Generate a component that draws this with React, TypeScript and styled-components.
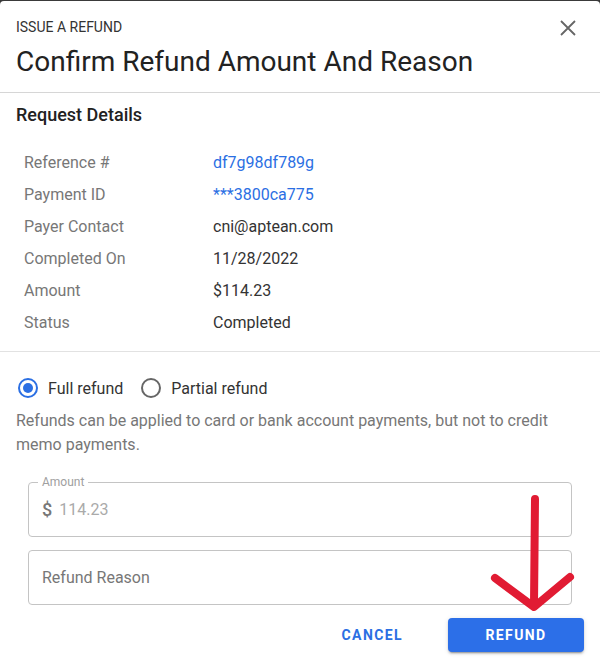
import { Fragment, useState } from 'react'
import styled, { createGlobalStyle } from 'styled-components'

const GlobalStyle = createGlobalStyle`
  html, body {
    margin: 0;
    padding: 0;
    background: #3a3a3a;
    font-family: Roboto, "Liberation Sans", Arial, sans-serif;
  }
`

const Dialog = styled.div`
  position: relative;
  width: 600px;
  height: 666px;
  margin-top: 1px;
  background: #fff;
  border-radius: 4px 4px 0 0;
  overflow: hidden;
`

const Header = styled.div`
  position: relative;
  padding: 16px 16px 12px;
  border-bottom: 1px solid #d6d6d6;
`

const Eyebrow = styled.div`
  font-size: 14px;
  line-height: 20px;
  color: #333;
  text-transform: uppercase;
`

const Title = styled.h1`
  margin: 7px 0 0;
  font-size: 28px;
  line-height: 36px;
  font-weight: 400;
  color: #222;
`

const CloseButton = styled.button`
  position: absolute;
  top: 17px;
  right: 22px;
  width: 20px;
  height: 20px;
  padding: 0;
  border: none;
  background: none;
  cursor: pointer;
  display: flex;
  align-items: center;
  justify-content: center;
`

const Section = styled.div`
  padding: 12px 16px 12px;
  border-bottom: 1px solid #e2e2e2;
`

const SectionTitle = styled.h2`
  margin: 0 0 22px;
  font-size: 18px;
  line-height: 20px;
  font-weight: 500;
  color: #222;
`

const Details = styled.div`
  display: grid;
  grid-template-columns: 189px 1fr;
  padding-left: 8px;
`

const Label = styled.div`
  font-size: 16px;
  line-height: 32px;
  color: #777;
`

const Value = styled.div<{ $link?: boolean }>`
  font-size: 16px;
  line-height: 32px;
  color: ${p => (p.$link ? '#2b6fe3' : '#333')};
`

const Body = styled.div`
  padding: 24px 16px 0;
`

const RadioGroup = styled.div`
  display: flex;
  align-items: center;
  gap: 16px;
  height: 24px;
`

const RadioLabel = styled.label`
  display: flex;
  align-items: center;
  gap: 10px;
  font-size: 16px;
  color: #333;
  cursor: pointer;
`

const RadioCircle = styled.span<{ $checked: boolean }>`
  box-sizing: border-box;
  width: 20px;
  height: 20px;
  margin-left: 2px;
  border-radius: 50%;
  border: 2px solid ${p => (p.$checked ? '#2b6fe3' : '#666')};
  display: flex;
  align-items: center;
  justify-content: center;
  &::after {
    content: '';
    width: 10px;
    height: 10px;
    border-radius: 50%;
    background: ${p => (p.$checked ? '#2b6fe3' : 'transparent')};
  }
`

const Note = styled.p`
  margin: 9px 0 0;
  font-size: 16px;
  line-height: 24px;
  color: #777;
`

const Fields = styled.div`
  display: flex;
  flex-direction: column;
  gap: 13px;
  margin: 25px 12px 0;
`

const Field = styled.div`
  box-sizing: border-box;
  height: 55px;
  padding: 0 13px;
  border: 1px solid #c4c4c4;
  border-radius: 4px;
  display: flex;
  align-items: center;
  position: relative;
`

const Legend = styled.span`
  position: absolute;
  top: -8px;
  left: 9px;
  padding: 0 4px;
  background: #fff;
  font-size: 12px;
  line-height: 14px;
  color: #a0a0a0;
`

const Dollar = styled.span`
  font-size: 18px;
  font-weight: 500;
  color: #777;
  margin-right: 7px;
`

const Input = styled.input<{ $muted?: boolean }>`
  flex: 1;
  border: none;
  outline: none;
  padding: 0;
  background: transparent;
  font-family: inherit;
  font-size: 16px;
  color: #333;
  &::placeholder {
    color: ${p => (p.$muted ? '#aaa' : '#777')};
  }
`

const Actions = styled.div`
  display: flex;
  justify-content: flex-end;
  align-items: center;
  gap: 23px;
  margin: 13px 0 0;
`

const Button = styled.button<{ $primary?: boolean }>`
  height: 34px;
  padding: 0 22px;
  min-width: ${p => (p.$primary ? '136px' : '100px')};
  border: none;
  border-radius: 4px;
  font-family: inherit;
  font-size: 14px;
  font-weight: 700;
  letter-spacing: 1.4px;
  text-transform: uppercase;
  cursor: pointer;
  color: ${p => (p.$primary ? '#fff' : '#2b6fe3')};
  background: ${p => (p.$primary ? '#2c6fe8' : 'transparent')};
  box-shadow: ${p =>
    p.$primary
      ? '0 3px 1px -2px rgba(0,0,0,0.2), 0 2px 2px 0 rgba(0,0,0,0.14), 0 1px 5px 0 rgba(0,0,0,0.12)'
      : 'none'};
`

const Annotation = styled.svg`
  position: absolute;
  left: 480px;
  top: 484px;
  pointer-events: none;
`

const details: { label: string; value: string; link?: boolean }[] = [
  { label: 'Reference #', value: 'df7g98df789g', link: true },
  { label: 'Payment ID', value: '***3800ca775', link: true },
  { label: 'Payer Contact', value: 'cni@aptean.com' },
  { label: 'Completed On', value: '11/28/2022' },
  { label: 'Amount', value: '$114.23' },
  { label: 'Status', value: 'Completed' },
]

export default function App() {
  const [mode, setMode] = useState<'full' | 'partial'>('full')

  return (
    <>
      <GlobalStyle />
      <Dialog>
        <Header>
          <Eyebrow>Issue a refund</Eyebrow>
          <Title>Confirm Refund Amount And Reason</Title>
          <CloseButton aria-label="close">
            <svg width="16" height="16" viewBox="0 0 16 16">
              <path d="M1 1L15 15M15 1L1 15" stroke="#666" strokeWidth="1.8" />
            </svg>
          </CloseButton>
        </Header>

        <Section>
          <SectionTitle>Request Details</SectionTitle>
          <Details>
            {details.map(d => (
              <Fragment key={d.label}>
                <Label>{d.label}</Label>
                <Value $link={d.link}>{d.value}</Value>
              </Fragment>
            ))}
          </Details>
        </Section>

        <Body>
          <RadioGroup>
            <RadioLabel onClick={() => setMode('full')}>
              <RadioCircle $checked={mode === 'full'} />
              Full refund
            </RadioLabel>
            <RadioLabel onClick={() => setMode('partial')}>
              <RadioCircle $checked={mode === 'partial'} />
              Partial refund
            </RadioLabel>
          </RadioGroup>
          <Note>
            Refunds can be applied to card or bank account payments, but not to credit
            memo payments.
          </Note>

          <Fields>
            <Field>
              <Legend>Amount</Legend>
              <Dollar>$</Dollar>
              <Input $muted placeholder="114.23" disabled={mode === 'full'} />
            </Field>
            <Field>
              <Input placeholder="Refund Reason" />
            </Field>
          </Fields>

          <Actions>
            <Button>Cancel</Button>
            <Button $primary>Refund</Button>
          </Actions>
        </Body>

        <Annotation width="100" height="130" viewBox="0 0 100 130">
          <path
            d="M55 14 L54 120 M15 93 L54 122 L90 92"
            stroke="#e11b33"
            strokeWidth="8"
            strokeLinecap="round"
            strokeLinejoin="round"
            fill="none"
          />
        </Annotation>
      </Dialog>
    </>
  )
}
